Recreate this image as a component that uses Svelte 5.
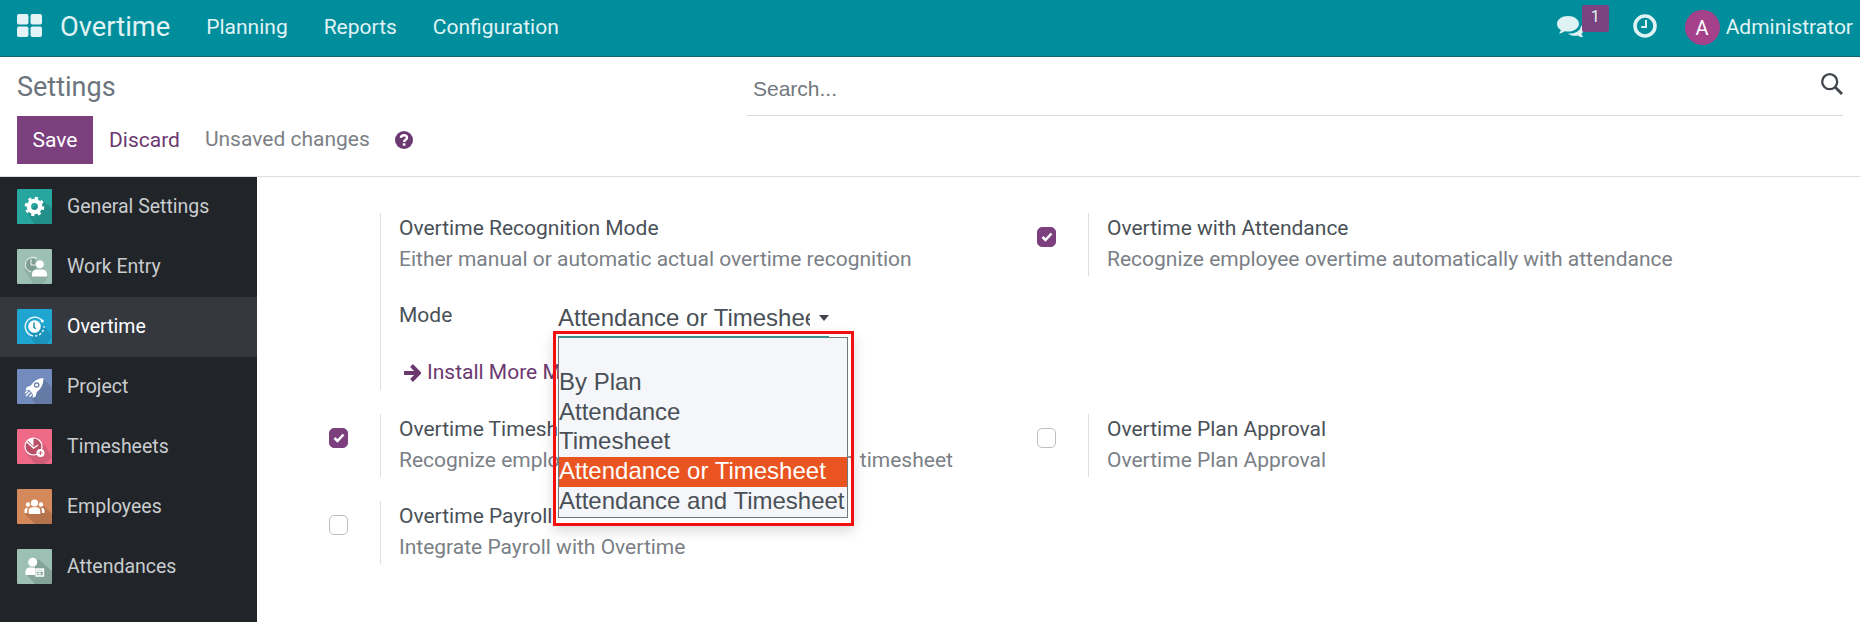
<script>
	let search = "";
	let activeApp = "Overtime";
	let mode = "Attendance or Timeshee";

	const menus = ["Planning", "Reports", "Configuration"];

	const apps = [
		{ name: "General Settings", icon: "gear", color: "#26a69f" },
		{ name: "Work Entry", icon: "entry", color: "#9cc1b4" },
		{ name: "Overtime", icon: "clock", color: "#1ea5d0" },
		{ name: "Project", icon: "rocket", color: "#728cbd" },
		{ name: "Timesheets", icon: "timesheet", color: "#ee6a87" },
		{ name: "Employees", icon: "people", color: "#d5895a" },
		{ name: "Attendances", icon: "attendance", color: "#9cc1b4" },
	];

	const modes = ["", "By Plan", "Attendance", "Timesheet", "Attendance or Timesheet", "Attendance and Timesheet"];
	const selected = "Attendance or Timesheet";
</script>

<div class="page">
	<header>
		<svg class="grid-icon" viewBox="0 0 24 22" fill="#e4f4f6">
			<rect x="0" y="0" width="11" height="10" rx="1.8" />
			<rect x="13" y="0" width="11" height="10" rx="1.8" />
			<rect x="0" y="12" width="11" height="10" rx="1.8" />
			<rect x="13" y="12" width="11" height="10" rx="1.8" />
		</svg>
		<span class="brand">Overtime</span>
		<nav>
			{#each menus as menu}
				<span>{menu}</span>
			{/each}
		</nav>
		<div class="systray">
			<div class="chat">
				<svg width="27" height="22" viewBox="0 0 27 22" fill="#dff3f5">
					<path d="M17 17c4-1 7-4 7-7.500 2 1 2.500 3 2.500 4.500 0 1.500-.8 2.800-2 3.800.3 1.500 1 2.500 1.700 3.200-2 .3-4-.5-5.200-1.600-4 .8-8-.1-10-2 2.500.3 4.300.1 6-.4z" />
					<path d="M11 0C4.900 0 0 3.500 0 8c0 2.500 1.500 4.600 3.900 6-.3 1.400-1 2.500-2 3.500 2.300-.1 4.300-1 5.800-2.200 1 .2 2.200.3 3.300.3 6.100 0 11-3.500 11-7.800S17.100 0 11 0z" />
				</svg>
				<span class="badge">1</span>
			</div>
			<svg class="clock" width="24" height="24" viewBox="0 0 24 24" fill="none" stroke="#dff3f5">
				<circle cx="12" cy="12" r="10" stroke-width="3.600" />
				<path d="M13 6v7H8.200" stroke-width="2" />
			</svg>
			<span class="avatar">A</span>
			<span class="user">Administrator</span>
		</div>
	</header>

	<div class="control-panel">
		<div class="left">
			<div class="title">Settings</div>
			<div class="buttons">
				<button class="save">Save</button>
				<button class="discard">Discard</button>
				<span class="unsaved">Unsaved changes</span>
				<svg width="18" height="18" viewBox="0 0 18 18">
					<circle cx="9" cy="9" r="9" fill="#6c3870" />
					<path d="M5.800 6.800C6.200 3.500 12 3.300 12 6.700c0 2.200-2.900 2-2.900 4.300" fill="none" stroke="#fff" stroke-width="2.400" />
					<rect x="7.800" y="12.300" width="2.600" height="2.400" fill="#fff" />
				</svg>
			</div>
		</div>
		<div class="search">
			<input type="text" placeholder="Search..." bind:value={search} />
			<svg width="22" height="22" viewBox="0 0 22 22" fill="none" stroke="#41464c">
				<circle cx="8.700" cy="8.700" r="7.500" stroke-width="2.300" />
				<path d="M14 14l7 7" stroke-width="2.800" />
			</svg>
		</div>
	</div>

	<div class="body">
		<aside>
			{#each apps as app}
				<div class="app" class:active={app.name == activeApp}>
					<svg width="35" height="35" viewBox="0 0 35 35">
						<rect width="35" height="35" rx="1" fill={app.color} />
						{#if app.icon == "gear"}
							<path d="M10 23l7 12h18V19l-9-7z" fill="#000" opacity=".13" />
							<circle cx="17.500" cy="17.500" r="5.600" fill="none" stroke="#fff" stroke-width="4.400" />
							<circle cx="17.500" cy="17.500" r="8.600" fill="none" stroke="#fff" stroke-width="2.400" stroke-dasharray="3.300 3.454" />
						{:else if app.icon == "entry"}
							<path d="M7 20l9 15h10l5-7-8-15z" fill="#000" opacity=".08" />
							<circle cx="14" cy="15.500" r="6.300" fill="#809f94" />
							<path d="M20 9.500A7.500 7.500 0 1 0 14 23" fill="none" stroke="#eef5f2" stroke-width="1" />
							<path d="M14 10v6h6" fill="none" stroke="#eef5f2" stroke-width="1" />
							<circle cx="22.800" cy="15.300" r="4.500" fill="#fff" stroke={app.color} />
							<path d="M15 27.500v-2.500c0-3 2-4.500 5-4.500h5c3 0 5 1.500 5 4.500v2.500z" fill="#fff" />
						{:else if app.icon == "clock"}
							<path d="M11 25l7 10h12l5-7-8-12z" fill="#000" opacity=".1" />
							<circle cx="17.500" cy="17.500" r="6.300" fill="#fff" />
							<path d="M25 11.500A9.500 9.500 0 1 0 16 27" fill="none" stroke="#e9f8fc" stroke-width="1.400" />
							<path d="M18 27a9.500 9.500 0 0 0 9-10" fill="none" stroke="#e9f8fc" stroke-width="1.400" stroke-dasharray="2.500 1.800" />
							<circle cx="25.300" cy="12" r="1.500" fill="#fff" />
							<path d="M17 13.500v4.700l1.700 1.500" fill="none" stroke="#147fa5" stroke-width="1.400" />
						{:else if app.icon == "rocket"}
							<path d="M12 25l6 10h17V18l-9-9z" fill="#000" opacity=".12" />
							<path d="M26.500 9c-6 .3-10 3.500-12.500 7.500l-4.500 1.700-1 3.300 4-.5 3.500 4.500-.5 3.500 3-1.500 1.300-4.500C24 20 26.500 15 26.500 9z" fill="#fff" />
							<circle cx="19.700" cy="16" r="2.200" fill="none" stroke="#6278a5" stroke-width="1.200" />
							<path d="M13 23l-4 4M10.500 22l-2.300 2.300M15 25l-2.500 2.800" stroke="#fff" stroke-width="1.300" />
						{:else if app.icon == "timesheet"}
							<path d="M9 24l9 11h10l7-7-8-13z" fill="#000" opacity=".12" />
							<circle cx="16.500" cy="17.500" r="8.500" fill="#b95068" stroke="#fff" stroke-width="1.200" />
							<path d="M16.500 17.500V9a8.500 8.500 0 0 0-5.800 2z" fill="#fff" />
							<path d="M10 13l6.500 6 4.500-3" fill="none" stroke="#fff" stroke-width="1.400" />
							<circle cx="23.500" cy="24" r="4" fill="#fff" />
							<path d="M21.500 24h4M23.500 22v4" stroke="#d95b77" />
						{:else if app.icon == "people"}
							<path d="M8 25l10 10h17V25l-8-8z" fill="#000" opacity=".15" />
							<circle cx="17.500" cy="14" r="3.600" fill="#fff" />
							<circle cx="11" cy="15.500" r="2.200" fill="#fff" />
							<circle cx="24" cy="15.500" r="2.200" fill="#fff" />
							<path d="M11.700 25v-3c0-2.500 1.500-3.800 4-3.800h3.600c2.500 0 4 1.300 4 3.800v3zM7.500 24v-2.500c0-1.800 1-2.800 3.700-2.800-1 1.300-1.100 2.300-1.100 5.300zM27.500 24v-2.500c0-1.800-1-2.800-3.700-2.800 1 1.300 1.100 2.300 1.100 5.300z" fill="#fff" />
						{:else}
							<path d="M9 25l9 10h17V22l-14-12z" fill="#000" opacity=".15" />
							<circle cx="15.700" cy="13.300" r="4.500" fill="#fff" />
							<path d="M8.500 26v-3c0-3 1.500-4.500 4.500-4.500h5v7.500z" fill="#fff" />
							<path d="M19 20h7.500v7H19zM19 22h7.500" fill="#8cada1" stroke="#fff" stroke-width="1.300" />
							<path d="M19.500 24.700h4M22.300 23.200l1.500 1.500-1.500 1.300" fill="none" stroke="#fff" stroke-width=".9" />
						{/if}
					</svg>
					<span>{app.name}</span>
				</div>
			{/each}
		</aside>

		<main>
			<div class="setting tall">
				<div class="check"></div>
				<div class="content">
					<div class="label">Overtime Recognition Mode</div>
					<div class="desc">Either manual or automatic actual overtime recognition</div>
					<div class="mode-row">
						<span class="label">Mode</span>
						<div class="select">
							<span class="value">{mode}</span>
							<span class="caret"></span>
							<div class="highlight">
								<ul>
									{#each modes as option}
										<li class:selected={option == selected}>{option}</li>
									{/each}
								</ul>
							</div>
						</div>
					</div>
					<div class="install">
						<svg width="17" height="18" viewBox="0 0 17 18" fill="none" stroke="#6c3870" stroke-width="4">
							<path d="M0 9h14M7.500 1.500L15 9l-7.500 7.500" />
						</svg>
						<span>Install More Modules</span>
					</div>
				</div>
			</div>

			<div class="setting">
				<div class="check"><span class="box checked"><svg width="12" height="10" viewBox="0 0 12 10"><path d="M1.500 5l3 3 6-6.500" /></svg></span></div>
				<div class="content">
					<div class="label">Overtime with Attendance</div>
					<div class="desc">Recognize employee overtime automatically with attendance</div>
				</div>
			</div>

			<div class="setting">
				<div class="check"><span class="box checked"><svg width="12" height="10" viewBox="0 0 12 10"><path d="M1.500 5l3 3 6-6.500" /></svg></span></div>
				<div class="content">
					<div class="label">Overtime Timesheet</div>
					<div class="desc">Recognize employee overtime automatically with timesheet</div>
				</div>
			</div>

			<div class="setting">
				<div class="check"><span class="box"></span></div>
				<div class="content">
					<div class="label">Overtime Plan Approval</div>
					<div class="desc">Overtime Plan Approval</div>
				</div>
			</div>

			<div class="setting">
				<div class="check"><span class="box"></span></div>
				<div class="content">
					<div class="label">Overtime Payroll</div>
					<div class="desc">Integrate Payroll with Overtime</div>
				</div>
			</div>
		</main>
	</div>
</div>

<style>
	:global(body) {
		background: #fff;
		overflow: hidden;
	}
	.page {
		height: 622px;
		display: flex;
		flex-direction: column;
		font-family: Roboto, sans-serif;
		font-size: 21px;
		line-height: 31px;
		color: #495057;
		white-space: nowrap;
	}

	/* top bar */
	header {
		height: 57px;
		box-sizing: border-box;
		border-bottom: 1px solid #15646d;
		background: #008e9c;
		color: #e0f3f5;
		display: flex;
		align-items: center;
		padding: 0 7px 2px 17px;
	}
	.grid-icon {
		width: 25px;
		height: 23px;
		margin-top: -3px;
	}
	.brand {
		font-size: 27.3px;
		margin-left: 18px;
	}
	nav {
		display: flex;
		gap: 36px;
		margin-left: 36px;
	}
	.systray {
		margin-left: auto;
		display: flex;
		align-items: center;
	}
	.chat {
		position: relative;
		height: 22px;
		margin-right: 49px;
	}
	.badge {
		position: absolute;
		left: 25px;
		top: -11px;
		width: 27px;
		height: 27px;
		line-height: 23px;
		font-size: 16px;
		text-align: center;
		border-radius: 2px;
		background: #7b4380;
	}
	.clock {
		margin: -2px 28px 0 0;
	}
	.avatar {
		width: 35px;
		height: 35px;
		line-height: 36px;
		border-radius: 50%;
		background: #a5408b;
		color: #fff;
		text-align: center;
		font-size: 20px;
		margin-right: 6px;
	}

	/* control panel */
	.control-panel {
		height: 120px;
		box-sizing: border-box;
		border-bottom: 1px solid #dcdfe2;
		display: flex;
		justify-content: space-between;
		padding: 0 17px;
	}
	.title {
		font-size: 27px;
		margin-top: 15px;
		color: #6c757d;
	}
	.buttons {
		display: flex;
		align-items: center;
		margin-top: 13px;
	}
	button {
		font: inherit;
		border: 0;
		padding: 0;
		height: 48px;
	}
	.save {
		width: 76px;
		background: #7c407f;
		color: #fff;
	}
	.discard {
		background: none;
		color: #6c3870;
		margin-left: 16px;
	}
	.unsaved {
		color: #7b8085;
		margin: -2px 25px 0 25px;
	}
	.search {
		width: 1096px;
		height: 58px;
		border-bottom: 1px solid #d8dadd;
		display: flex;
		align-items: flex-start;
	}
	.search input {
		flex: 1;
		border: 0;
		outline: 0;
		padding: 20px 6px 0;
		font: 21px "Liberation Sans", sans-serif;
	}
	.search input::placeholder {
		color: #72777d;
	}
	.search svg {
		margin-top: 16px;
	}

	/* sidebar */
	.body {
		flex: 1;
		display: flex;
		min-height: 0;
	}
	aside {
		width: 257px;
		background: #212529;
		color: #c9cccf;
		font-size: 19.5px;
	}
	.app {
		height: 60px;
		box-sizing: border-box;
		display: flex;
		align-items: flex-start;
		gap: 15px;
		padding: 12px 0 0 17px;
	}
	.app span {
		margin-top: 2px;
	}
	.app.active {
		background: #35393f;
		color: #fff;
	}

	/* settings */
	main {
		flex: 1;
		display: grid;
		grid-template-columns: 708px 708px;
		grid-auto-rows: max-content;
		row-gap: 24px;
		padding: 36px 0 0 51px;
	}
	.setting {
		display: flex;
		align-items: flex-start;
	}
	.check {
		width: 72px;
		padding-top: 14px;
		padding-left: 21px;
		box-sizing: border-box;
		display: flex;
	}
	.box {
		width: 19px;
		height: 20px;
		box-sizing: border-box;
		border: 1px solid #bcbec0;
		border-radius: 5px;
		display: flex;
		align-items: center;
		justify-content: center;
	}
	.box.checked {
		background: #7c407f;
		border-color: #7c407f;
	}
	.box path {
		fill: none;
		stroke: #fff;
		stroke-width: 2.5;
	}
	.content {
		border-left: 1px solid #dcdfe2;
		padding-left: 18px;
		height: 63px;
	}
	.tall .content {
		height: 177px;
	}
	.desc {
		color: #7a8086;
	}
	.mode-row {
		display: flex;
		margin-top: 25px;
	}
	.mode-row > .label {
		width: 159px;
	}
	.select {
		position: relative;
		width: 271px;
		height: 37px;
		display: flex;
		align-items: flex-start;
		font: 24px/30px "Liberation Sans", sans-serif;
	}
	/* focus underline, stays above the opened list */
	.select::after {
		content: "";
		position: absolute;
		z-index: 2;
		left: 0;
		right: 0;
		bottom: -1px;
		height: 2px;
		background: #3b8e8c;
	}
	.value {
		width: 252px;
		margin-top: 3px;
		overflow: hidden;
	}
	.caret {
		border: 5px solid transparent;
		border-top: 6px solid #41464c;
		border-bottom: 0;
		margin: 15px 0 0 9px;
	}
	.highlight {
		position: absolute;
		z-index: 1;
		left: -5px;
		top: 31px;
		width: 295px;
		height: 189px;
		border: 3px solid #f40f0f;
		box-shadow: 0 5px 12px rgba(0, 0, 0, 0.15);
	}
	ul {
		list-style: none;
		margin: 3px 3px 0 2px;
		padding: 0;
		border: 1px solid #737679;
		background: #f5f6fa;
		height: 179px;
	}
	li {
		height: 29.8px;
		line-height: 27px;
	}
	li.selected {
		background: #e95420;
		color: #fff;
	}
	.install {
		display: flex;
		align-items: center;
		gap: 6px;
		margin: 20px 0 0 5px;
		color: #6c3870;
	}
</style>
